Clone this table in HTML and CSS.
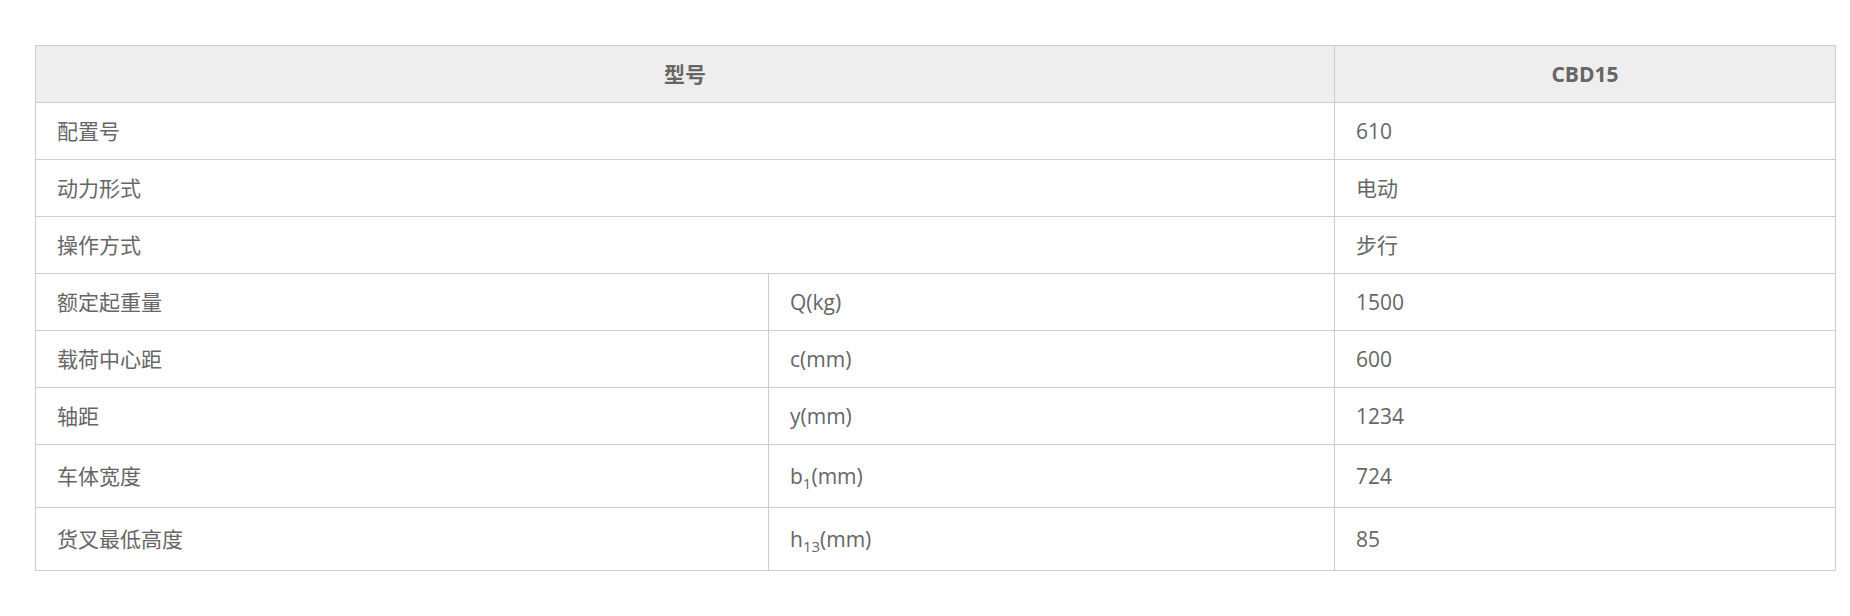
FILE: index.html
```html
<!DOCTYPE html>
<html lang="zh">
<head>
<meta charset="utf-8">
<title>CBD15</title>
<link rel="stylesheet" href="styles.css">
</head>
<body>
<div class="wrap">
<table class="spec">
  <colgroup>
    <col class="c1">
    <col class="c2">
    <col class="c3">
  </colgroup>
  <thead>
    <tr>
      <th colspan="2">型号</th>
      <th>CBD15</th>
    </tr>
  </thead>
  <tbody>
    <tr><td colspan="2">配置号</td><td>610</td></tr>
    <tr><td colspan="2">动力形式</td><td>电动</td></tr>
    <tr><td colspan="2">操作方式</td><td>步行</td></tr>
    <tr><td>额定起重量</td><td>Q(kg)</td><td>1500</td></tr>
    <tr><td>载荷中心距</td><td>c(mm)</td><td>600</td></tr>
    <tr><td>轴距</td><td>y(mm)</td><td>1234</td></tr>
    <tr class="subrow"><td>车体宽度</td><td>b<sub>1</sub>(mm)</td><td>724</td></tr>
    <tr class="subrow"><td>货叉最低高度</td><td>h<sub>13</sub>(mm)</td><td>85</td></tr>
  </tbody>
</table>
</div>
</body>
</html>
```

FILE: styles.css
```css
html, body {
  margin: 0;
  padding: 0;
  background: #ffffff;
}

body {
  font-family: "Open Sans", "Noto Sans CJK SC", sans-serif;
  color: #666666;
}

.wrap {
  padding: 45px 0 0 35px;
}

.spec {
  width: 1800px;
  border-collapse: collapse;
  table-layout: fixed;
  font-size: 21px;
}

.c1 { width: 733px; }
.c2 { width: 566px; }
.c3 { width: 501px; }

.spec th,
.spec td {
  border: 1px solid #cccccc;
  padding: 0 21px;
  height: 57px;
  line-height: 30px;
  text-align: left;
  vertical-align: middle;
  box-sizing: border-box;
}

.spec th {
  background: #eeeeee;
  font-weight: 700;
  text-align: center;
  color: #666666;
}

.spec .subrow td {
  height: 63px;
}

.spec sub {
  font-size: 15px;
  line-height: 0;
  vertical-align: -5px;
}
```
